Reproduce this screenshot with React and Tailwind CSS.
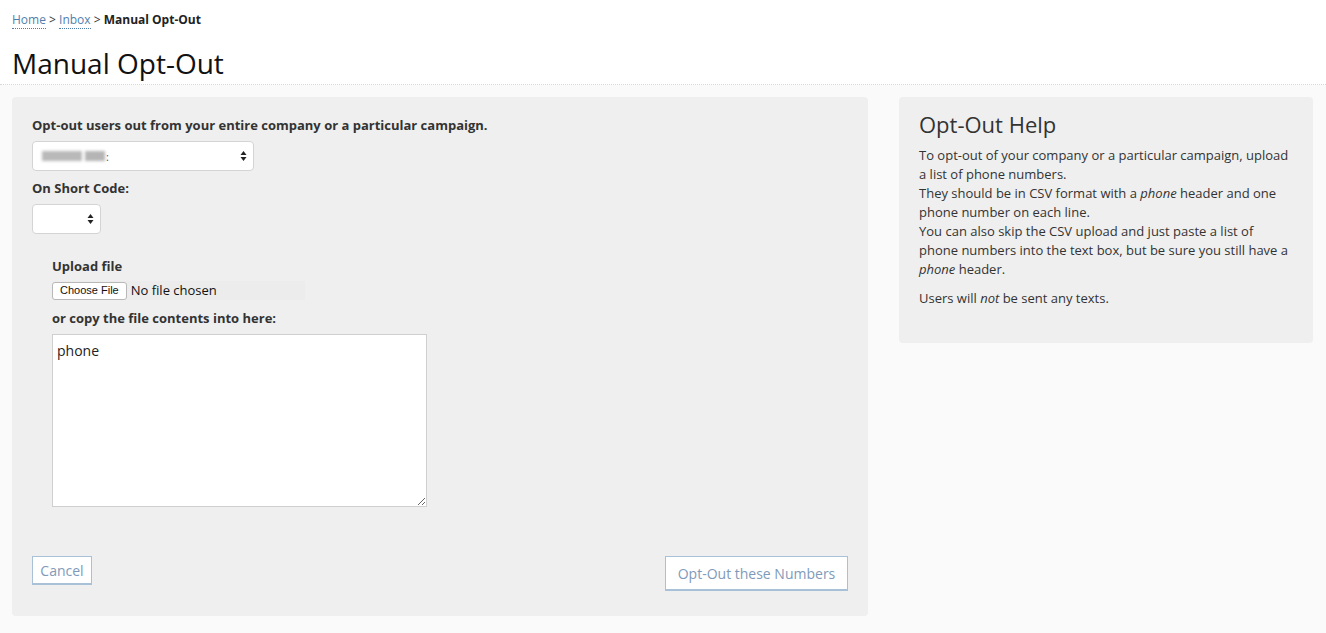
import React from "react";

function SelectArrows() {
    return (
        <svg width="7" height="12" viewBox="0 0 7 12" className="text-[#222]">
            <path d="M3.5 1 L6.5 5 L0.5 5 Z" fill="currentColor" />
            <path d="M3.5 11 L6.5 7 L0.5 7 Z" fill="currentColor" />
        </svg>
    );
}

export default function App() {
    return (
        <div className="min-h-[633px] bg-[#fafafa] text-[#333] font-['Open_Sans',sans-serif]">
            {/* Header */}
            <div className="bg-white border-b border-dotted border-[#d8d8d8] px-3 pt-[11px] pb-[2px]">
                <div className="text-[12px] leading-[17px]">
                    <a className="text-[#4f7fae] border-b border-dotted border-[#4f7fae]">Home</a>
                    <span> &gt; </span>
                    <a className="text-[#4f7fae] border-b border-dotted border-[#4f7fae]">Inbox</a>
                    <span> &gt; </span>
                    <span className="font-bold text-[#222]">Manual Opt-Out</span>
                </div>
                <h1 className="text-[28px] leading-[38px] mt-[26px] text-[#111] -translate-y-[10px] mb-[-10px]">Manual Opt-Out</h1>
            </div>

            <div className="flex gap-[31px] px-3 pt-3">
                {/* Left panel */}
                <div className="w-[856px] h-[519px] bg-[#efefef] rounded-[4px] px-5 pt-[19px] pb-[25px] flex flex-col">
                    <div className="text-[13px] font-bold leading-[18px]">Opt-out users out from your entire company or a particular campaign.</div>
                    <div className="mt-[7px] w-[222px] h-[30px] bg-white border border-[#d4d4d4] rounded-[4px] flex items-center justify-between pl-[9px] pr-[6px]">
                        <div className="flex items-center gap-[3px]">
                            <div className="w-[40px] h-[10px] bg-[#b9b9b9] blur-[1.5px]" />
                            <div className="w-[20px] h-[10px] bg-[#b5b5b5] blur-[1.5px]" />
                            <span className="text-[11px] leading-none text-[#555] -ml-[2px]">:</span>
                        </div>
                        <SelectArrows />
                    </div>
                    <div className="text-[13px] font-bold leading-[18px] mt-[8px]">On Short Code:</div>
                    <div className="mt-[7px] w-[69px] h-[30px] bg-white border border-[#d4d4d4] rounded-[4px] flex items-center justify-end pr-[6px]">
                        <SelectArrows />
                    </div>

                    <div className="pl-5 mt-[23px]">
                        <div className="text-[13px] font-bold leading-[18px]">Upload file</div>
                        <div className="mt-[6px] w-[253px] h-[19px] bg-[#ececec] flex items-center">
                            <button className="h-[18px] px-[7px] bg-white border border-[#b8b8b8] rounded-[3px] text-[11px] leading-none text-[#111] font-['Liberation_Sans',sans-serif]">Choose File</button>
                            <span className="ml-[4px] text-[13px] text-[#111]">No file chosen</span>
                        </div>
                        <div className="text-[13px] font-bold leading-[18px] mt-[9px]">or copy the file contents into here:</div>
                        <textarea
                            className="mt-[7px] block w-[375px] h-[173px] bg-white border border-[#cfcfcf] px-[4px] py-[6px] text-[14px] leading-[19px] text-[#222] resize outline-none"
                            defaultValue="phone"
                        />
                    </div>

                    <div className="mt-auto flex justify-between items-end">
                        <button className="w-[60px] h-[29px] bg-white border border-[#a9c1d7] border-b-2 text-[14px] text-[#7f9aba] mb-[6px]">Cancel</button>
                        <button className="w-[183px] h-[35px] bg-white border border-[#a9c1d7] border-b-2 text-[14px] text-[#7f9aba]">Opt-Out these Numbers</button>
                    </div>
                </div>

                {/* Right panel */}
                <div className="w-[414px] h-[246px] bg-[#efefef] rounded-[4px] px-5 pt-[12px]">
                    <h2 className="text-[22px] leading-[30px] text-[#333]">Opt-Out Help</h2>
                    <p className="mt-[7px] text-[13px] leading-[19px]">
                        To opt-out of your company or a particular campaign, upload a list of phone numbers.
                        <br />
                        They should be in CSV format with a <i>phone</i> header and one phone number on each line.
                        <br />
                        You can also skip the CSV upload and just paste a list of phone numbers into the text box, but be sure you still have a <i>phone</i> header.
                    </p>
                    <p className="mt-[10px] text-[13px] leading-[19px]">
                        Users will <i>not</i> be sent any texts.
                    </p>
                </div>
            </div>
        </div>
    );
}
